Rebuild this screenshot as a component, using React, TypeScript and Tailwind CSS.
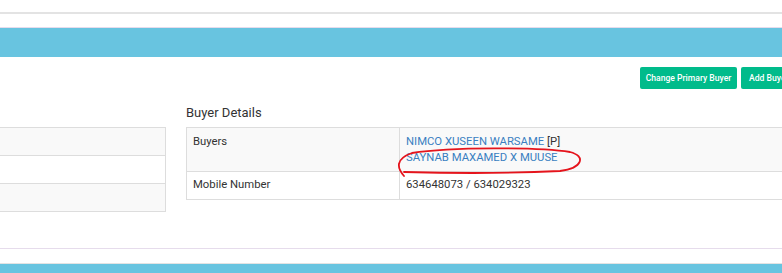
import React from "react";

const leftRows = ["bg-[#f9f9f9]", "bg-white", "bg-[#f9f9f9]"];

const App = () => {
  return (
    <div className="w-[782px] h-[273px] overflow-hidden bg-white font-['Roboto',sans-serif] text-[#333]">
      <div className="h-[12px]" />
      <div className="h-[2px] bg-[#e3e3e3]" />
      <div className="h-[13px]" />
      <div className="h-px bg-[#e6dcec]" />
      <div className="h-[29px] bg-[#68c4e0]" />

      <div className="w-[830px] flex justify-end gap-[4px] mt-[10px]">
        <button className="h-[22px] w-[97px] rounded-[2px] bg-[#00bb8b] text-white text-[8.6px] font-medium">
          Change Primary Buyer
        </button>
        <button className="h-[22px] w-[89px] rounded-[2px] bg-[#00bb8b] text-white text-[8.6px] font-medium text-left pl-[8px]">
          Add Buyer
        </button>
      </div>

      <div className="flex mt-[16px]">
        <div className="w-[166px] shrink-0 pt-[22px]">
          <div className="border-t border-r border-[#ddd]">
            {leftRows.map((bg, i) => (
              <div key={i} className={`h-[28px] border-b border-[#ddd] ${bg}`} />
            ))}
          </div>
        </div>

        <div className="ml-[20px] w-[700px] shrink-0">
          <h3 className="h-[22px] text-[13px] leading-[16px]">Buyer Details</h3>
          <div className="relative border border-[#ddd] text-[11.3px]">
            <div className="flex bg-[#f9f9f9] border-b border-[#ddd] h-[44px]">
              <div className="w-[213px] border-r border-[#ddd] px-[6px] pt-[6px]">Buyers</div>
              <div className="px-[6px] pt-[6px] leading-[16px]">
                <div>
                  <a className="text-[#3a7fc1]">NIMCO XUSEEN WARSAME</a> [P]
                </div>
                <div>
                  <a className="text-[#3a7fc1]">SAYNAB MAXAMED X MUUSE</a>
                </div>
              </div>
            </div>
            <div className="flex bg-white h-[27px]">
              <div className="w-[213px] border-r border-[#ddd] px-[6px] pt-[5px]">Mobile Number</div>
              <div className="px-[6px] pt-[5px]">634648073 / 634029323</div>
            </div>
            <svg className="absolute left-[-187px] top-[-128px] pointer-events-none" width="782" height="273">
              <path
                d="M404 176 C397 168, 395 159, 412 153 C450 147, 540 147, 570 152 C586 156, 583 168, 560 171 C500 174, 440 173, 404 172"
                fill="none"
                stroke="#e5141c"
                strokeWidth="1.8"
                strokeLinecap="round"
              />
            </svg>
          </div>
        </div>
      </div>

      <div className="mt-[36px] h-px bg-[#e6dcec]" />
      <div className="h-[14px]" />
      <div className="h-px bg-[#e3e3e3]" />
      <div className="h-[12px] bg-[#68c4e0]" />
    </div>
  );
};

export default App;
